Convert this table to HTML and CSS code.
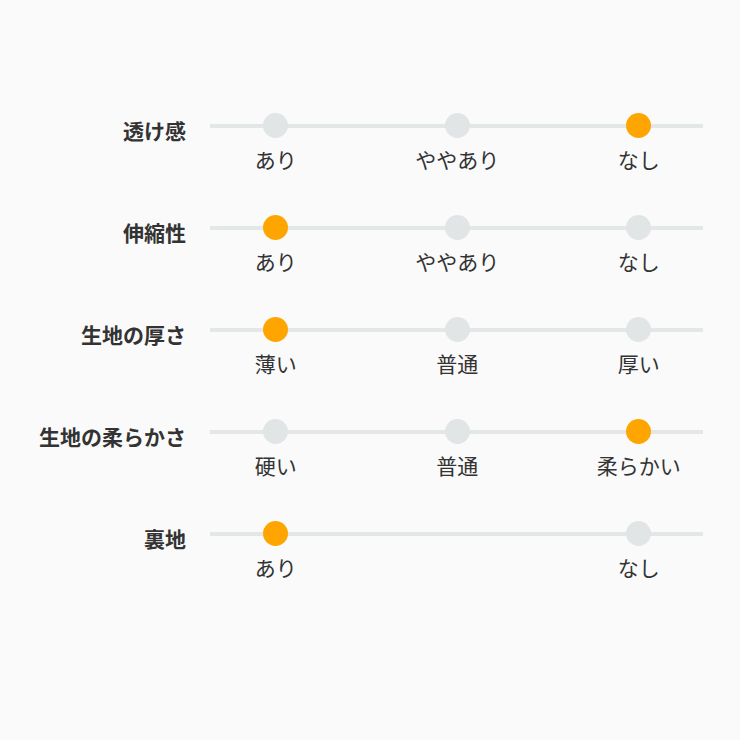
FILE: index.html
```html
<!DOCTYPE html>
<html lang="ja">
<head>
<meta charset="utf-8">
<link rel="stylesheet" href="styles.css">
</head>
<body>
<main class="chart">
  <div class="row">
    <div class="label">透け感</div>
    <div class="slider">
      <div class="opt"><span class="dot"></span><span class="txt">あり</span></div>
      <div class="opt"><span class="dot"></span><span class="txt">ややあり</span></div>
      <div class="opt"><span class="dot on"></span><span class="txt">なし</span></div>
    </div>
  </div>
  <div class="row">
    <div class="label">伸縮性</div>
    <div class="slider">
      <div class="opt"><span class="dot on"></span><span class="txt">あり</span></div>
      <div class="opt"><span class="dot"></span><span class="txt">ややあり</span></div>
      <div class="opt"><span class="dot"></span><span class="txt">なし</span></div>
    </div>
  </div>
  <div class="row">
    <div class="label">生地の厚さ</div>
    <div class="slider">
      <div class="opt"><span class="dot on"></span><span class="txt">薄い</span></div>
      <div class="opt"><span class="dot"></span><span class="txt">普通</span></div>
      <div class="opt"><span class="dot"></span><span class="txt">厚い</span></div>
    </div>
  </div>
  <div class="row">
    <div class="label">生地の柔らかさ</div>
    <div class="slider">
      <div class="opt"><span class="dot"></span><span class="txt">硬い</span></div>
      <div class="opt"><span class="dot"></span><span class="txt">普通</span></div>
      <div class="opt"><span class="dot on"></span><span class="txt">柔らかい</span></div>
    </div>
  </div>
  <div class="row">
    <div class="label">裏地</div>
    <div class="slider">
      <div class="opt"><span class="dot on"></span><span class="txt">あり</span></div>
      <div class="opt empty"></div>
      <div class="opt"><span class="dot"></span><span class="txt">なし</span></div>
    </div>
  </div>
</main>
</body>
</html>
```
FILE: styles.css
```css
html, body {
  margin: 0;
  padding: 0;
  background: #fafafa;
}
body {
  width: 740px;
  height: 740px;
  font-family: "Noto Sans CJK JP", "Noto Sans", sans-serif;
  color: #333;
}
.chart {
  padding-top: 113px;
  display: flex;
  flex-direction: column;
}
.row {
  display: grid;
  grid-template-columns: 186px 546px;
  height: 102px;
}
.label {
  font-size: 21px;
  font-weight: 700;
  line-height: 28px;
  text-align: right;
  margin-top: 3px;
  white-space: nowrap;
}
.slider {
  margin-left: -1px;
  display: grid;
  grid-template-columns: repeat(3, 181.5px);
  align-items: start;
  background: linear-gradient(#e3e7e7, #e3e7e7) no-repeat 25px 11px / 493px 4px;
  height: 25px;
}
.opt {
  display: flex;
  flex-direction: column;
  align-items: center;
}
.dot {
  width: 25px;
  height: 25px;
  border-radius: 50%;
  background: #e1e5e6;
}
.dot.on {
  background: #ffa500;
}
.txt {
  margin-top: 7px;
  font-size: 21px;
  line-height: 28px;
  white-space: nowrap;
}
```
